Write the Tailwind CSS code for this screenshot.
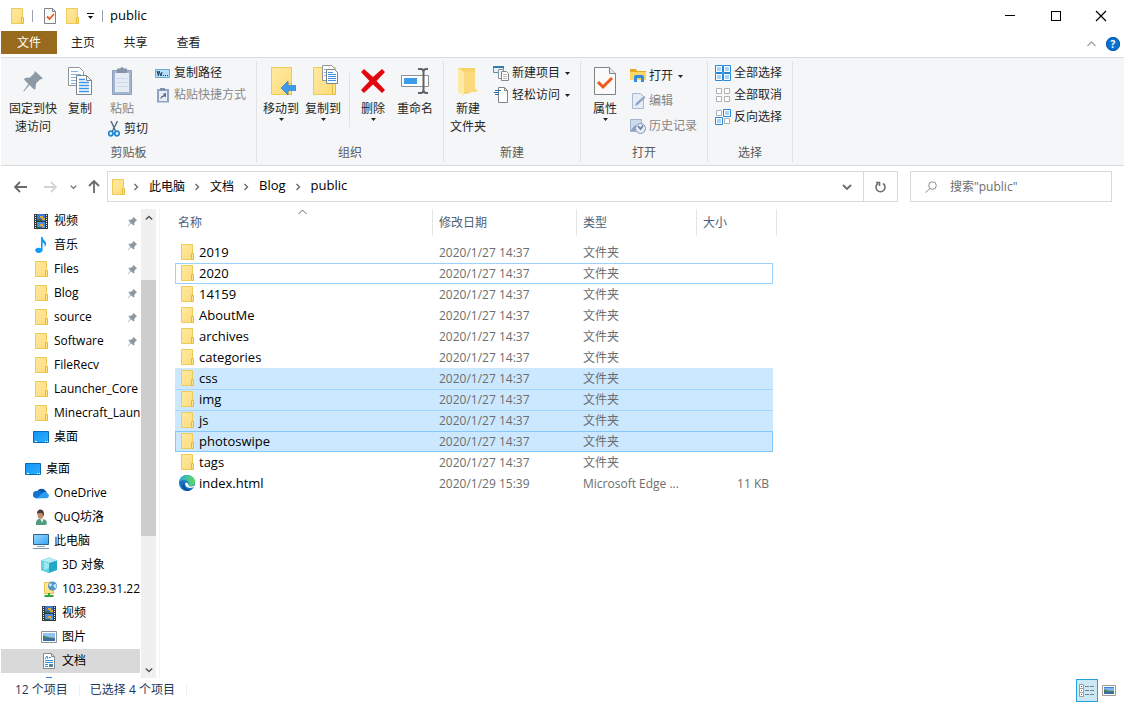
<!DOCTYPE html>
<html lang="zh-CN">
  <head>
    <meta charset="UTF-8" />
    <meta name="viewport" content="width=device-width, initial-scale=1.0" />
    <title>public</title>
    <script src="https://cdn.jsdelivr.net/npm/@tailwindcss/browser@4"></script>
  </head>
  <body
    class="flex h-screen flex-col overflow-hidden bg-white px-px font-['Open_Sans','Noto_Sans_CJK_SC',sans-serif] text-xs text-black"
  >
    <!-- Icon sprite -->
    <svg width="0" height="0" class="absolute" aria-hidden="true">
      <defs>
        <linearGradient id="gFolder" x1="0" y1="0" x2="1" y2="1">
          <stop offset="0" stop-color="#ffe9a2" />
          <stop offset="1" stop-color="#fddc79" />
        </linearGradient>
        <linearGradient id="gBlue" x1="0" y1="0" x2="1" y2="1">
          <stop offset="0" stop-color="#0f93f5" />
          <stop offset="1" stop-color="#2fb0ff" />
        </linearGradient>
        <linearGradient id="gPc" x1="0" y1="0" x2="1" y2="1">
          <stop offset="0" stop-color="#9bd8ff" />
          <stop offset="1" stop-color="#38a4f5" />
        </linearGradient>
        <linearGradient id="gEdge" x1="0" y1="0" x2="1" y2="0">
          <stop offset="0" stop-color="#2ba6e0" />
          <stop offset="1" stop-color="#5fdc5a" />
        </linearGradient>
      </defs>
      <symbol id="folder" viewBox="0 0 16 16">
        <path d="M2.5 .5h11v14.5l-1 .5h-10z" fill="url(#gFolder)" stroke="#eccb58" />
        <path d="M12.5 9.5h2v6h-2z" fill="#ffe38d" stroke="#e5bb3d" />
      </symbol>
      <symbol id="pin" viewBox="0 0 12 12">
        <path d="M7.2 1 11 4.8 9.8 5.4 8 7.4 8 9.8 7 10.4 4.5 8 1 11.3 .6 11 3.8 7.3 1.6 5 2.2 4.1 4.6 4.1 6.6 2.3z" fill="#8a97a3" />
      </symbol>
      <symbol id="film" viewBox="0 0 16 16">
        <rect x="1" y="1" width="14" height="15" fill="#33383d" />
        <rect x="4" y="1" width="8" height="7" fill="#3c7ad6" />
        <rect x="4" y="9" width="8" height="6" fill="#4c90e4" />
        <path d="M7 3h3v2H7zM9 5h3v2H9zM7 11h3v2H7zM9 13h2v1H9z" fill="#d9a93a" />
        <path d="M4 6h5v2H4zM4 14h5v1H4z" fill="#2a6d46" />
        <path d="M2 2h1v1H2zM2 4h1v1H2zM2 6h1v1H2zM2 8h1v1H2zM2 10h1v1H2zM2 12h1v1H2zM2 14h1v1H2zM13 2h1v1h-1zM13 4h1v1h-1zM13 6h1v1h-1zM13 8h1v1h-1zM13 10h1v1h-1zM13 12h1v1h-1zM13 14h1v1h-1z" fill="#e8eaec" />
      </symbol>
      <symbol id="music" viewBox="0 0 16 16">
        <path d="M8 0v11.200A3.700 2.600 0 1 0 9.600 13.300V5.500c2 .8 2.600 2.500 2 4.700 2.300-2.600 1.800-4.700.2-6.300C10.500 2.700 9.700 1.500 9.600 0z" fill="#109bfa" />
      </symbol>
      <symbol id="desktop" viewBox="0 0 16 16">
        <path d="M.5 2.500h15v11H.5z" fill="url(#gBlue)" stroke="#0b6cb4" />
        <path d="M2 12.500h2M12 12.500h1M14 12.500h1" stroke="#fff" />
      </symbol>
      <symbol id="cloud" viewBox="0 0 16 16">
        <path d="M4.500 6A4.800 4.800 0 0 1 12.600 5.800L14 8 9 11z" fill="#0a55b2" />
        <path d="M3.300 13.200A3.500 3.500 0 0 1 3.900 6C6 5.400 7.500 7 9 8l5 4.700z" fill="#1173d0" />
        <path d="M9 8.500c2-2 4-1.600 5-.5 2.600 1 2.400 5-.6 5.200H3c2-.7 4-3 6-4.700z" fill="#2d9bf0" />
      </symbol>
      <symbol id="user" viewBox="0 0 16 16">
        <path d="M3 16c-.6-4 1.500-6 4-6.500l3.500.5c3 1 3.700 3.300 3.300 5.500-3 .8-7 .9-10.800.5z" fill="#4f9b7d" />
        <path d="m7 9 2 5 2-5z" fill="#e9efec" />
        <ellipse cx="7.500" cy="5.500" rx="3" ry="4.300" fill="#c08d6c" />
        <path d="M4 5c-.4-6 7.300-6 7 .3l-1 2.200c0-2-.4-3-1.500-3.500C7 4.300 5.500 3.700 4 5z" fill="#4a3b35" />
      </symbol>
      <symbol id="pc" viewBox="0 0 16 16">
        <path d="M.5 1.500h15v10H.5z" fill="url(#gPc)" stroke="#28648f" />
        <path d="M4 13.500h8" stroke="#8fa2b2" />
        <path d="M0 15.500h16" stroke="#7e95a8" />
      </symbol>
      <symbol id="cube" viewBox="0 0 16 16">
        <path d="M0 3.500 8 .500l8 3v9.500L8 16l-8-3z" fill="#21a9c6" />
        <path d="M0 3.500 8 .500l8 3L8 6z" fill="#b3eef7" />
        <path d="M0 3.500 8 6v10l-8-3z" fill="#62d2e4" />
        <path d="m3 5 5 1.500V11l-5 2z" fill="#9ae9f3" />
      </symbol>
      <symbol id="netfolder" viewBox="0 0 16 16">
        <path d="M3.500 1.500h9v11h-9z" fill="url(#gFolder)" stroke="#e7c24d" />
        <circle cx="11.500" cy="5" r="4.500" fill="#4c95cd" />
        <path d="M8 3.500c2-2.500 3-.5 2.600 1S8.500 6 8 3.500zM12 4l3-1c.8 2 .4 3.500-1 4.500z" fill="#d3e8f5" />
        <path d="M8 12v3M3.500 15h9" stroke="#2da832" stroke-width="2" />
      </symbol>
      <symbol id="picture" viewBox="0 0 16 16">
        <path d="M.5 2.500h15v11H.5z" fill="#fff" stroke="#8f9499" />
        <path d="M2 4h12v8H2z" fill="#8fc5ee" />
        <path d="M2 6c3 2 6 2 12 3v3H2z" fill="#4b7f76" />
        <path d="M2 10c4-1 8 0 12-.5V12H2z" fill="#3c6da8" />
      </symbol>
      <symbol id="photo" viewBox="0 0 14 11">
        <path d="M.5 .500h13v10H.5z" fill="#fff" stroke="#a09c98" />
        <path d="M2 2h10v7H2z" fill="#7fb8f0" />
        <path d="M2 2h10v1H2z" fill="#3f86d8" />
        <path d="M2 4c2 1 5 2 10 2v1H2z" fill="#4b7f56" />
        <path d="M2 7h10v2H2z" fill="#3c6da8" />
      </symbol>
      <symbol id="document" viewBox="0 0 16 16">
        <path d="M2.500 .500h8l3 3v12h-11z" fill="#fff" stroke="#858b90" />
        <path d="M10.500 .500v3h3" fill="none" stroke="#858b90" />
        <path d="m4 6 2-3 1 3M8 4.500h2M4 7.500h8M4 9.500h8M4 11.500h3M4 13.500h3" fill="none" stroke="#3a8fd0" />
        <path d="M8 11h4v3H8z" fill="#4f86a0" />
      </symbol>
      <symbol id="download" viewBox="0 0 16 16">
        <path d="M5 0h6v8h3l-6 7-6-7h3z" fill="#2b7fd0" />
      </symbol>
      <symbol id="edge" viewBox="0 0 16 16">
        <circle cx="8" cy="8" r="8" fill="#1573c4" />
        <path d="M.3 6.500C1.500 1.500 5 0 8.200 0c5 0 8 3.700 7.800 7-.2 3-2.700 4-5 4-1.600 0-2.300-.7-1.800-1.400C10.300 8 9 5.200 5.700 5.200 3.500 5.200 1.500 5.500.3 6.500z" fill="url(#gEdge)" />
        <path d="M5.500 8.500C4.500 12.500 8 15.500 12.800 14.300 10.500 16 8.500 16.200 6.500 15.500 2.500 13.500 2.700 9.500 5.500 8.500z" fill="#0d4f98" />
        <path d="M9.200 9.600C9 11.500 12 12 14.800 10.500c.4.400.2 1-.5 1.700C10 14 6 12 6.200 8.800 6.500 7 8.500 7 9.200 9.600z" fill="#fff" />
      </symbol>
      <symbol id="caret" viewBox="0 0 5 3">
        <path d="M0 0h5L2.500 3z" fill="#222" />
      </symbol>
      <symbol id="crumb" viewBox="0 0 8 8">
        <path d="m2.500 1 3 3-3 3" fill="none" stroke="#6d6d6d" stroke-width="1.400" />
      </symbol>
      <symbol id="chevdown" viewBox="0 0 10 8">
        <path d="m1 2 4 4 4-4" fill="none" stroke="currentColor" stroke-width="1.800" />
      </symbol>
    </svg>

    <!-- Title bar -->
    <header class="flex h-[31px] shrink-0 items-center">
      <div class="flex flex-1 items-center">
        <svg class="ml-2 size-4"><use href="#folder" /></svg>
        <span class="ml-[7px] h-3 w-px bg-gray-400"></span>
        <button class="ml-[9px]" aria-label="属性">
          <svg class="size-4" viewBox="0 0 16 16">
            <path d="M2.500 .500h8l3 3v12h-11z" fill="#fafafa" stroke="#7e8387" />
            <path d="M10.500 .500v3h3" fill="none" stroke="#7e8387" />
            <path d="m5 8.500 2.500 2.500L12 6" fill="none" stroke="#e8561e" stroke-width="1.800" />
          </svg>
        </button>
        <button class="ml-1.5" aria-label="新建文件夹">
          <svg class="size-4"><use href="#folder" /></svg>
        </button>
        <button class="ml-[7px]" aria-label="自定义快速访问工具栏">
          <svg class="h-2 w-[7px]" viewBox="0 0 7 8">
            <path d="M0 1.500h7" stroke="#111" />
            <path d="M1 4h5L3.500 7z" fill="#111" />
          </svg>
        </button>
        <span class="ml-2 h-3 w-px bg-gray-400"></span>
        <h1 class="ml-[7px] pb-px text-[13px] leading-4">public</h1>
      </div>
      <button class="flex h-full w-[46px] items-center justify-center" aria-label="最小化">
        <span class="h-px w-2.5 bg-black"></span>
      </button>
      <button class="flex h-full w-[45px] items-center justify-center" aria-label="最大化">
        <span class="size-2.5 border border-black"></span>
      </button>
      <button class="flex h-full w-[46px] items-center justify-center" aria-label="关闭">
        <svg class="size-3" viewBox="0 0 12 12"><path d="m1 1 10 10M11 1 1 11" stroke="#000" stroke-width="1.200" /></svg>
      </button>
    </header>

    <!-- Tabs -->
    <nav class="flex h-[27px] shrink-0 items-start border-b border-[#dadbdc] text-[#222]">
      <button class="h-[23px] w-14 bg-[#986a1d] pt-px text-white">文件</button>
      <button class="h-[23px] w-[52px] pt-px">主页</button>
      <button class="h-[23px] w-[53px] pt-px">共享</button>
      <button class="h-[23px] w-[53px] pt-px">查看</button>
      <div class="ml-auto flex h-6 items-center gap-2.5 pr-1 pt-0.5">
        <button aria-label="最小化功能区">
          <svg class="h-2 w-[9px]" viewBox="0 0 9 8"><path d="m.5 6 4-4 4 4" fill="none" stroke="#a3a3a3" stroke-width="1.300" /></svg>
        </button>
        <button
          class="flex size-3.5 items-center justify-center rounded-full bg-[#0a72cf] text-[10px] font-bold leading-none text-white outline outline-[#0b5ca6] -outline-offset-1"
          aria-label="帮助"
        >
          ?
        </button>
      </div>
    </nav>

    <!-- Ribbon -->
    <section class="flex h-[108px] shrink-0 border-b border-[#dadbdc] bg-[#f5f6f7] py-[3px] leading-[18px] text-[#262626]">
      <div class="flex w-64 flex-col border-r border-[#e1e2e3]">
        <div class="flex h-[85px] pl-1">
          <button class="flex w-14 flex-col items-center px-1 pt-1">
            <svg class="h-8 w-5 shrink-0" viewBox="0 0 20 32">
              <path d="m12 6 8 7.500-3 1-4 4-.5 5.500-1.500.5-4.500-4.500L1 26.500.3 26l5.200-7L1 14.500 2 13l5-.5 4-4z" fill="#8d9aa5" />
            </svg>
            <span class="mt-[3px]">固定到快<br />速访问</span>
          </button>
          <button class="flex w-[38px] flex-col items-center pt-1">
            <svg class="h-8 w-6 shrink-0" viewBox="0 0 24 32">
              <path d="M.5 2.500h11l4 4v14H.5z" fill="#fff" stroke="#8f959b" />
              <path d="M3 6.500h7M3 9.500h10M3 12.500h10M3 15.500h10M3 18.500h10" stroke="#7fb4e6" />
              <path d="M8.500 10.500h10l5 5v14h-15z" fill="#fff" stroke="#7d8389" />
              <path d="M18.500 10.500v5h5" fill="none" stroke="#7d8389" />
              <path d="M11 14.500h6M11 17.500h10M11 20.500h10M11 23.500h10M11 26.500h10" stroke="#3c93e6" stroke-width="1.500" />
            </svg>
            <span class="mt-[3px]">复制</span>
          </button>
          <div class="ml-px flex w-[55px] flex-col items-start text-left">
            <button class="flex w-11 flex-col items-center pt-1 text-[#868686]">
              <svg class="h-8 w-5 shrink-0" viewBox="0 0 20 32">
                <path d="M.5 5.500h19v24H.5z" fill="#a5b5d0" stroke="#8d9fbe" />
                <path d="M3 8h14v19H3z" fill="#e6ecf5" />
                <path d="M5 3.500h3q2-3 4 0h3V8H5z" fill="#8694ac" />
                <path d="M4 13.500h12M4 17.500h12M4 21.500h12" stroke="#d0dbea" />
              </svg>
              <span class="mt-[3px]">粘贴</span>
            </button>
            <button class="mt-0.5 flex items-center gap-1 pl-2">
              <svg class="h-4 w-3" viewBox="0 0 12 16">
                <path d="m3 0 4.500 10M9.500 0 4.500 10" stroke="#566b80" stroke-width="1.400" />
                <ellipse cx="2.800" cy="12.500" rx="2.200" ry="2.300" fill="none" stroke="#1b86d0" stroke-width="1.700" />
                <ellipse cx="9" cy="12.500" rx="2.200" ry="2.300" fill="none" stroke="#1b86d0" stroke-width="1.700" />
              </svg>
              剪切
            </button>
          </div>
          <div class="flex flex-col gap-1 pt-[3px]">
            <button class="flex items-center gap-1">
              <svg class="h-4 w-[15px]" viewBox="0 0 15 16">
                <path d="M.5 4.500h14v8H.5z" fill="#b5defb" stroke="#6ea9d6" />
                <path d="m2 6 1.500 5L4 6l2 5 1-4" fill="none" stroke="#1c3c60" />
                <path d="M8 10.500h1M10 10.500h1M12 10.500h1" stroke="#1c3c60" />
              </svg>
              复制路径
            </button>
            <button class="flex items-center gap-1 text-[#868686]">
              <svg class="h-4 w-[15px]" viewBox="0 0 15 16">
                <path d="M2 2h12v13.500H2z" fill="#8fa2c3" />
                <path d="M4 4h8v10H4z" fill="#e9eef6" />
                <path d="M5 1h5v2.500H5z" fill="#8190ab" />
                <path d="M5.500 12.500c0-3 1-4 3-4V6.500L11 6v4.500l-1-1C8 9.500 7 10.500 5.500 12.500z" fill="#566c96" />
              </svg>
              粘贴快捷方式
            </button>
          </div>
        </div>
        <div class="text-center text-[#5a5a5a]">剪贴板</div>
      </div>

      <div class="flex w-[187px] flex-col border-r border-[#e1e2e3]">
        <div class="flex h-[85px] pl-[3px]">
          <button class="flex w-[42px] flex-col items-center pt-1">
            <svg class="h-8 w-[30px] shrink-0" viewBox="0 0 30 32">
              <path d="M5.500 2.500h20v27h-20z" fill="url(#gFolder)" stroke="#eccb58" />
              <path d="M22.500 18.500h3v11h-3z" fill="#ffe38d" stroke="#e5bb3d" />
              <path d="m15 23 7-7v4.500h8v5h-8V30z" fill="#3f9bea" stroke="#2a82d2" stroke-width=".7" />
            </svg>
            <span class="mt-[3px]">移动到</span>
            <svg class="h-[3px] w-[5px]"><use href="#caret" /></svg>
          </button>
          <button class="flex w-[42px] flex-col items-center pt-1">
            <svg class="h-8 w-[30px] shrink-0" viewBox="0 0 30 32">
              <path d="M5.500 2.500h22v27h-22z" fill="url(#gFolder)" stroke="#eccb58" />
              <path d="M24.500 18.500h3v11h-3z" fill="#ffe38d" stroke="#e5bb3d" />
              <path d="M14.500 .500h9l3 3v12h-12z" fill="#fff" stroke="#8f959b" />
              <path d="M16 4.500h7M16 7.500h3M16 10.500h3" stroke="#7fb4e6" />
              <path d="M18.500 4.500h8l3 3v11h-11z" fill="#fff" stroke="#7d8389" />
              <path d="M20 7.500h5M20 9.500h8M20 11.500h8M20 13.500h8M20 15.500h8" stroke="#3c93e6" />
            </svg>
            <span class="mt-[3px]">复制到</span>
            <svg class="h-[3px] w-[5px]"><use href="#caret" /></svg>
          </button>
          <span class="ml-[5px] mr-0.5 mt-3 h-[54px] w-px bg-[#e1e2e3]"></span>
          <button class="flex w-[42px] flex-col items-center pt-1">
            <svg class="h-8 w-[26px] shrink-0" viewBox="0 0 26 32">
              <path d="m1 7 3-3 9 8 9-8 3 3-8.500 9 8.500 9-3 3-9-8.500L4 28l-3-3 8.500-9z" fill="#e2060f" />
            </svg>
            <span class="mt-[3px]">删除</span>
            <svg class="h-[3px] w-[5px]"><use href="#caret" /></svg>
          </button>
          <button class="flex w-[42px] flex-col items-center pt-1">
            <svg class="h-8 w-[30px] shrink-0" viewBox="0 0 30 32">
              <path d="M1.500 10.500h27v11h-27z" fill="#fff" stroke="#8b9094" />
              <path d="M4 13h13v6H4z" fill="#3c9cec" />
              <path d="M18 4h3q2 0 2.500 2.500Q24 4 26 4h2M23.500 5v22M18 28h3q2 0 2.500-2.500Q24 28 26 28h2" fill="none" stroke="#5f6468" stroke-width="2" />
            </svg>
            <span class="mt-[3px]">重命名</span>
          </button>
        </div>
        <div class="text-center text-[#5a5a5a]">组织</div>
      </div>

      <div class="flex w-[137px] flex-col border-r border-[#e1e2e3]">
        <div class="flex h-[85px]">
          <button class="flex w-12 flex-col items-center pt-1">
            <svg class="h-8 w-5 shrink-0" viewBox="0 0 20 32">
              <path d="M0 3h17v23l-9 3-8-2z" fill="#f7d36c" />
              <path d="M6 7h11v17h2v3H6z" fill="#fbda7d" />
              <path d="m0 3 6 4v24l-6-4z" fill="#ffe9a9" />
            </svg>
            <span class="mt-[3px]">新建<br />文件夹</span>
          </button>
          <div class="flex flex-col gap-1 pl-px pt-[3px]">
            <button class="flex items-center gap-[3px]">
              <svg class="size-4" viewBox="0 0 16 16">
                <path d="M.5 1.500h10v6H.5z" fill="#e0f2fd" stroke="#4e95b9" />
                <path d="M0 2h11" stroke="#387da3" stroke-width="2" />
                <path d="M5.500 4.500h5v9h-5z" fill="#f2f6f9" stroke="#8b959c" />
                <path d="M8.500 6.500h5l2 2v7h-7z" fill="#fff" stroke="#80868b" />
                <path d="M10 9.500h4M10 11.500h4M10 13.500h4" stroke="#bbb" />
              </svg>
              新建项目
              <svg class="ml-0.5 h-[3px] w-[5px]"><use href="#caret" /></svg>
            </button>
            <button class="flex items-center gap-[3px]">
              <svg class="size-4" viewBox="0 0 16 16">
                <path d="M5.500 .500h6l3 3v12h-9z" fill="#fff" stroke="#7e8387" />
                <path d="M11.500 .500v3h3" fill="none" stroke="#7e8387" />
                <path d="M2 3.500h6M1 5.500h5M2 7.500h3" stroke="#2a72b5" />
              </svg>
              轻松访问
              <svg class="ml-0.5 h-[3px] w-[5px]"><use href="#caret" /></svg>
            </button>
          </div>
        </div>
        <div class="text-center text-[#5a5a5a]">新建</div>
      </div>

      <div class="flex w-[126px] flex-col">
        <div class="flex h-[85px]">
          <button class="flex w-12 flex-col items-center pt-1">
            <svg class="h-8 w-[22px] shrink-0" viewBox="0 0 22 32">
              <path d="M.5 2.500h15l6 6v21H.5z" fill="#fafafa" stroke="#7e8387" />
              <path d="M15.500 2.500v6h6" fill="#e4e6e8" stroke="#7e8387" />
              <path d="m4 17 5 5 9-9" fill="none" stroke="#ea5a18" stroke-width="3" />
            </svg>
            <span class="mt-[3px]">属性</span>
            <svg class="h-[3px] w-[5px]"><use href="#caret" /></svg>
          </button>
          <div class="flex flex-col gap-[7px] pl-px pt-1.5">
            <button class="flex items-center gap-[3px]">
              <svg class="size-4" viewBox="0 0 16 16">
                <path d="M0 1h6l1 2h9v8H0z" fill="#e4a91f" />
                <path d="M0 4h16v8H0z" fill="#fcd668" />
                <path d="M4 14V9q0-2 2-2h6q2 0 2 2v5h-3v-4H7v4z" fill="#2e8fe0" />
              </svg>
              打开
              <svg class="ml-0.5 h-[3px] w-[5px]"><use href="#caret" /></svg>
            </button>
            <button class="flex items-center gap-[3px] text-[#868686]">
              <svg class="size-4" viewBox="0 0 16 16">
                <path d="M2.500 .500h8l3 3v12h-11z" fill="#e6edf7" stroke="#a9b7cf" />
                <path d="m5 13 1-3 8-7 1.500 1.500-8 7.500z" fill="#8fa3c6" />
              </svg>
              编辑
            </button>
            <button class="flex items-center gap-[3px] text-[#868686]">
              <svg class="size-4" viewBox="0 0 16 16">
                <path d="M.5 1.500h11v12H.5z" fill="#cfdaec" stroke="#a3b3d0" />
                <path d="m1 12 4-5 3 3v3H1z" fill="#8ea2c6" />
                <circle cx="10.500" cy="10.500" r="5" fill="#e3eaf5" stroke="#8396b8" />
                <path d="M8 8l2.500 3L13 7.500" fill="none" stroke="#66799d" stroke-width="1.500" />
              </svg>
              历史记录
            </button>
          </div>
        </div>
        <div class="text-center text-[#5a5a5a]">打开</div>
      </div>

      <div class="flex w-[86px] flex-col border-x border-[#e1e2e3]">
        <div class="flex h-[85px] flex-col items-start gap-1 pl-[7px] pt-[3px]">
          <button class="flex items-center gap-[3px]">
            <svg class="size-4" viewBox="0 0 16 16">
              <path d="M.5 .500h7v7h-7zM8.500 .500h7v7h-7zM.5 8.500h7v7h-7zM8.500 8.500h7v7h-7z" fill="#fff" stroke="#2489dc" />
              <path d="M2 2h4v4H2zM10 2h4v4h-4zM2 10h4v4H2zM10 10h4v4h-4z" fill="#a6d3f6" />
            </svg>
            全部选择
          </button>
          <button class="flex items-center gap-[3px]">
            <svg class="size-4" viewBox="0 0 16 16">
              <path d="M1.500 1.500h5v5h-5zM9.500 1.500h5v5h-5zM1.500 9.500h5v5h-5zM9.500 9.500h5v5h-5z" fill="#fff" stroke="#b1b1b1" />
            </svg>
            全部取消
          </button>
          <button class="flex items-center gap-[3px]">
            <svg class="size-4" viewBox="0 0 16 16">
              <path d="M1.500 1.500h5v5h-5zM9.500 9.500h5v5h-5z" fill="#fff" stroke="#b1b1b1" />
              <path d="M8.500 .500h7v7h-7zM.5 8.500h7v7h-7z" fill="#fff" stroke="#2489dc" />
              <path d="M10 2h4v4h-4zM2 10h4v4H2z" fill="#a6d3f6" />
            </svg>
            反向选择
          </button>
        </div>
        <div class="text-center text-[#5a5a5a]">选择</div>
      </div>
    </section>

    <!-- Address bar -->
    <div class="flex h-[43px] shrink-0 items-start pr-3 pt-[5px]">
      <div class="flex h-[31px] w-[106px] shrink-0 items-center pl-[13px] text-[#6a6a6a]">
        <button aria-label="后退">
          <svg class="h-3 w-[13px]" viewBox="0 0 13 12"><path d="M13 6H1M6 1 1 6l5 5" fill="none" stroke="currentColor" stroke-width="1.800" /></svg>
        </button>
        <button class="ml-[17px] text-[#d4d4d4]" aria-label="前进">
          <svg class="h-3 w-[13px]" viewBox="0 0 13 12"><path d="M0 6h12M7 1l5 5-5 5" fill="none" stroke="currentColor" stroke-width="1.800" /></svg>
        </button>
        <button class="ml-[13px]" aria-label="最近浏览的位置">
          <svg class="h-1.5 w-[7px]"><use href="#chevdown" /></svg>
        </button>
        <button class="ml-[11px]" aria-label="上移">
          <svg class="h-[13px] w-3" viewBox="0 0 12 13"><path d="M6 13V1M1 6l5-5 5 5" fill="none" stroke="currentColor" stroke-width="1.800" /></svg>
        </button>
      </div>
      <div class="flex h-[31px] flex-1 items-center border border-[#d9d9d9]">
        <svg class="ml-0.5 size-4"><use href="#folder" /></svg>
        <svg class="ml-1.5 mr-[9px] size-2"><use href="#crumb" /></svg>
        <button>此电脑</button>
        <svg class="ml-2 mr-[9px] size-2"><use href="#crumb" /></svg>
        <button>文档</button>
        <svg class="ml-2 mr-[9px] size-2"><use href="#crumb" /></svg>
        <button class="pb-px text-[13px]">Blog</button>
        <svg class="ml-2 mr-[9px] size-2"><use href="#crumb" /></svg>
        <button class="pb-px text-[13px]">public</button>
        <button class="ml-auto mr-[11px] text-[#6a6a6a]" aria-label="以前的位置">
          <svg class="h-2 w-2.5"><use href="#chevdown" /></svg>
        </button>
        <button class="flex h-full w-[34px] items-center justify-center border-l border-[#d9d9d9]" aria-label="刷新">
          <svg class="h-3 w-[11px]" viewBox="0 0 11 12">
            <path d="M8 2.500a4.500 4.500 0 1 1-5 0M1 1.500h3.500V5" fill="none" stroke="#6f6f6f" stroke-width="1.600" />
          </svg>
        </button>
      </div>
      <label class="ml-3 flex h-[31px] w-[202px] shrink-0 items-center border border-[#d9d9d9]">
        <svg class="ml-3.5 size-3" viewBox="0 0 12 12">
          <circle cx="7.500" cy="4.500" r="3.800" fill="none" stroke="#8b8b8b" />
          <path d="M5 7.500.5 11.500" stroke="#8b8b8b" />
        </svg>
        <input class="ml-[13px] w-36 outline-none placeholder:text-[#6d6d6d]" type="text" placeholder='搜索"public"' aria-label="搜索" />
      </label>
    </div>

    <!-- Navigation pane and file list -->
    <main class="flex min-h-0 flex-1">
      <aside class="flex w-[159px] shrink-0 border-r border-[#f3f3f3]">
        <ul id="tree" class="w-[139px] overflow-hidden"></ul>
        <div class="ml-px flex w-[15px] flex-col bg-[#f0f0f0] text-[#555]">
          <button class="flex h-[17px] items-center justify-center" aria-label="向上滚动">
            <svg class="h-2 w-2 rotate-180"><use href="#chevdown" /></svg>
          </button>
          <div class="mt-[54px] h-64 bg-[#cdcdcd]"></div>
          <button class="mt-auto flex h-[17px] items-center justify-center" aria-label="向下滚动">
            <svg class="h-2 w-2"><use href="#chevdown" /></svg>
          </button>
        </div>
      </aside>

      <div class="flex-1 overflow-hidden pl-[15px]">
        <table class="w-[598px] table-fixed text-left">
          <thead class="text-[#4c607a]">
            <tr class="h-[33px] align-top">
              <th class="w-[258px] font-normal">
                <div class="relative flex h-[27px] items-center border-r border-[#e5e5e5] pl-[3px]">
                  名称
                  <svg class="absolute left-1/2 top-0 h-1.5 w-[9px] -translate-x-1.5" viewBox="0 0 9 6"><path d="m.5 5 4-4 4 4" fill="none" stroke="#6a6a6a" /></svg>
                </div>
              </th>
              <th class="w-36 font-normal"><div class="flex h-[27px] items-center border-r border-[#e5e5e5] pl-1.5">修改日期</div></th>
              <th class="w-[120px] font-normal"><div class="flex h-[27px] items-center border-r border-[#e5e5e5] pl-1.5">类型</div></th>
              <th class="font-normal"><div class="flex h-[27px] w-20 items-center border-r border-[#e5e5e5] pl-1.5">大小</div></th>
            </tr>
          </thead>
          <tbody id="files"></tbody>
        </table>
      </div>
    </main>

    <!-- Status bar -->
    <footer class="flex h-6 shrink-0 items-center pl-3.5 pr-[7px] text-[#1e395b]">
      <span>12 个项目</span>
      <span class="ml-[11px] mr-2.5 h-3 w-px bg-[#f0f0f0]"></span>
      <span>已选择 4 个项目</span>
      <span class="ml-[11px] mr-2.5 h-3 w-px bg-[#f0f0f0]"></span>
      <button class="ml-auto flex h-[23px] w-[22px] items-center justify-center border border-[#26a0da] bg-[#cbe8f6]" aria-label="详细信息">
        <svg class="h-[13px] w-4" viewBox="0 0 16 13">
          <path d="M.5 .500h4v12h-4zM.5 4.500h4M.5 8.500h4" fill="#fff" stroke="#a09c98" />
          <path d="M6 2.500h4M11 2.500h4M6 6.500h4M11 6.500h4M6 10.500h4M11 10.500h4" stroke="#77818a" />
          <path d="M2 2h1v1H2z" fill="#444" />
          <path d="M2 6h1v1H2z" fill="#2c83d0" />
          <path d="M2 10h1v1H2z" fill="#d02020" />
        </svg>
      </button>
      <button class="ml-1 mr-px" aria-label="大图标">
        <svg class="h-[11px] w-3.5"><use href="#photo" /></svg>
      </button>
    </footer>

    <script>
      // icon, label, indent class, pinned
      const tree = [
        ["film", "视频", "pl-8", true],
        ["music", "音乐", "pl-8", true],
        ["folder", "Files", "pl-8", true],
        ["folder", "Blog", "pl-8", true],
        ["folder", "source", "pl-8", true],
        ["folder", "Software", "pl-8", true],
        ["folder", "FileRecv", "pl-8"],
        ["folder", "Launcher_Core", "pl-8"],
        ["folder", "Minecraft_Laun", "pl-8"],
        ["desktop", "桌面", "pl-8"],
        null,
        ["desktop", "桌面", "pl-6"],
        ["cloud", "OneDrive", "pl-8"],
        ["user", "QuQ坊洛", "pl-8"],
        ["pc", "此电脑", "pl-8"],
        ["cube", "3D 对象", "pl-10"],
        ["netfolder", "103.239.31.22", "pl-10"],
        ["film", "视频", "pl-10"],
        ["picture", "图片", "pl-10"],
        ["document", "文档", "pl-10 bg-[#d9d9d9]"],
        ["download", "", "pl-10"],
      ];
      document.getElementById("tree").innerHTML = tree
        .map((item) => {
          if (!item) return `<li class="h-2"></li>`;
          const [icon, label, cls, pinned] = item;
          return `<li class="flex h-6 items-center ${cls}">
            <svg class="size-4 shrink-0"><use href="#${icon}" /></svg>
            <span class="ml-[5px] whitespace-nowrap">${label}</span>
            ${pinned ? `<svg class="ml-auto mr-0.5 size-[11px] shrink-0"><use href="#pin" /></svg>` : ""}
          </li>`;
        })
        .join("");

      const folder = (name, state) => ["folder", name, "2020/1/27 14:37", "文件夹", "", state];
      const files = [
        folder("2019"),
        folder("2020", "focus"),
        folder("14159"),
        folder("AboutMe"),
        folder("archives"),
        folder("categories"),
        folder("css", "first"),
        folder("img", "selected"),
        folder("js", "selected"),
        folder("photoswipe", "current"),
        folder("tags"),
        ["edge", "index.html", "2020/1/29 15:39", "Microsoft Edge ...", "11 KB"],
      ];
      const rowClass = {
        focus: "shadow-[inset_0_0_0_1px_#99d1ff]",
        first: "bg-[#cce8ff]",
        selected: "bg-[#cce8ff] shadow-[inset_0_1px_0_#a3d5ff]",
        current: "bg-[#cce8ff] shadow-[inset_0_0_0_1px_#84c7fb]",
      };
      document.getElementById("files").innerHTML = files
        .map(
          ([icon, name, date, type, size, state]) => `<tr class="h-[21px] text-[#6d6d6d] ${rowClass[state] || ""}">
            <td class="p-0"><div class="flex items-center gap-1 pb-px pl-1 text-[13px] leading-4 text-black">
              <svg class="size-4"><use href="#${icon}" /></svg>${name}
            </div></td>
            <td class="p-0 pl-1.5">${date}</td>
            <td class="p-0 pl-1.5">${type}</td>
            <td class="p-0 pr-1 text-right">${size}</td>
          </tr>`
        )
        .join("");
    </script>
  </body>
</html>
